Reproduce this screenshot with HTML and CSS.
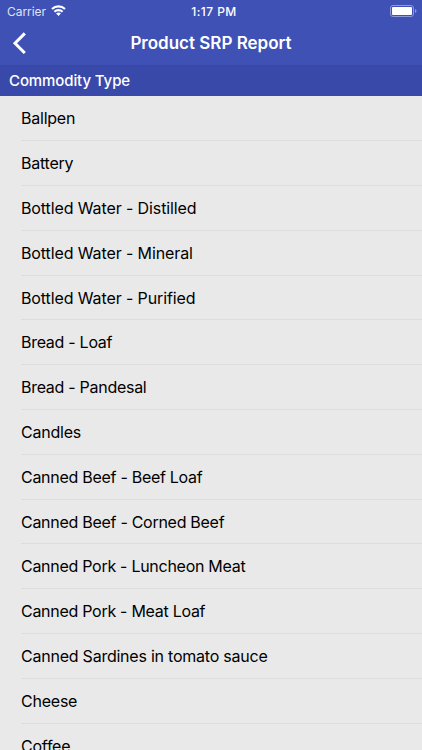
FILE: index.html
```html
<!DOCTYPE html>
<html lang="en">
<head>
<meta charset="utf-8">
<title>Product SRP Report</title>
<link rel="stylesheet" href="styles.css">
</head>
<body>
<div class="screen">
  <header class="top">
    <div class="status">
      <div class="carrier"><span class="carrier-name">Carrier</span>
        <svg class="wifi" width="15" height="11" viewBox="0 0 15 11"><path fill="none" stroke="#fff" stroke-width="2.1" d="M1 4.1C4.6.4 10.4.4 14 4.1M3.4 6.8C5.7 4.6 9.3 4.6 11.6 6.8"/><path fill="#fff" d="M5.1 8.5Q7.5 6.5 9.9 8.5L7.5 10.9Z"/></svg>
      </div>
      <span class="time">1:17 PM</span>
      <svg class="battery" width="27" height="12" viewBox="0 0 27 12"><rect x=".5" y=".5" width="23" height="11" rx="2.5" fill="none" stroke="#8e99d8"/><rect x="2" y="2" width="20" height="8" rx="1" fill="#fff"/><path d="M25 4Q26.5 4.5 26.5 6T25 8Z" fill="#8e99d8"/></svg>
    </div>
    <nav class="nav">
      <svg class="back" width="14" height="22" viewBox="0 0 14 22"><path d="M12.8 1.4 3 11.2 12.8 21" fill="none" stroke="#fff" stroke-width="3"/></svg>
      <h1 class="title">Product SRP Report</h1>
    </nav>
  </header>
  <h2 class="section">Commodity Type</h2>
  <ul class="list">
    <li>Ballpen</li><li>Battery</li><li class="wide">Bottled Water - Distilled</li><li class="wide">Bottled Water - Mineral</li><li class="wide">Bottled Water - Purified</li><li class="tight">Bread - Loaf</li><li class="tight">Bread - Pandesal</li><li>Candles</li><li class="tight">Canned Beef - Beef Loaf</li><li class="tight">Canned Beef - Corned Beef</li><li class="tight">Canned Pork - Luncheon Meat</li><li class="tight">Canned Pork - Meat Loaf</li><li>Canned Sardines in tomato sauce</li><li>Cheese</li><li>Coffee</li>
  </ul>
</div>
</body>
</html>
```
FILE: styles.css
```css
* { box-sizing: border-box; }
body { margin: 0; font-family: Inter, "Liberation Sans", sans-serif; }
.screen { height: 750px; overflow: hidden; background: #e9e9e9; }
.top { height: 65px; background: #4051b5; color: #fff; }
.status { height: 22px; display: grid; grid-template-columns: 1fr auto 1fr; align-items: center; padding: 0 5px 0 7px; font-size: 12px; }
.carrier { display: flex; align-items: center; gap: 5px; color: #dfe2f5; }
.carrier-name { letter-spacing: -.05px; }
.wifi { margin-top: -1px; }
.time { margin-left: 4px; font-weight: 500; letter-spacing: .45px; }
.battery { justify-self: end; margin-top: -1px; }
.nav { height: 43px; display: grid; grid-template-columns: 40px 1fr 40px; align-items: center; }
.back { margin: -1px 0 0 12px; }
.title { margin: 0; text-align: center; font-size: 17px; font-weight: 600; line-height: 43px; }
.section { margin: 0; height: 31px; padding-left: 9px; background: #3949aa; color: #fff; border-top: 1px solid #3747a6; font-size: 15px; font-weight: 500; line-height: 30px; letter-spacing: -.1px; }
.list { margin: 0; padding: 0.4px 0 0 21px; list-style: none; }
.list li { height: 44.8px; border-bottom: 1px solid #dcdddf; font-size: 16px; line-height: 45.4px; letter-spacing: -.23px; color: #000; }
.list .wide { letter-spacing: -.11px; }
.list .tight { letter-spacing: -.28px; }
```
